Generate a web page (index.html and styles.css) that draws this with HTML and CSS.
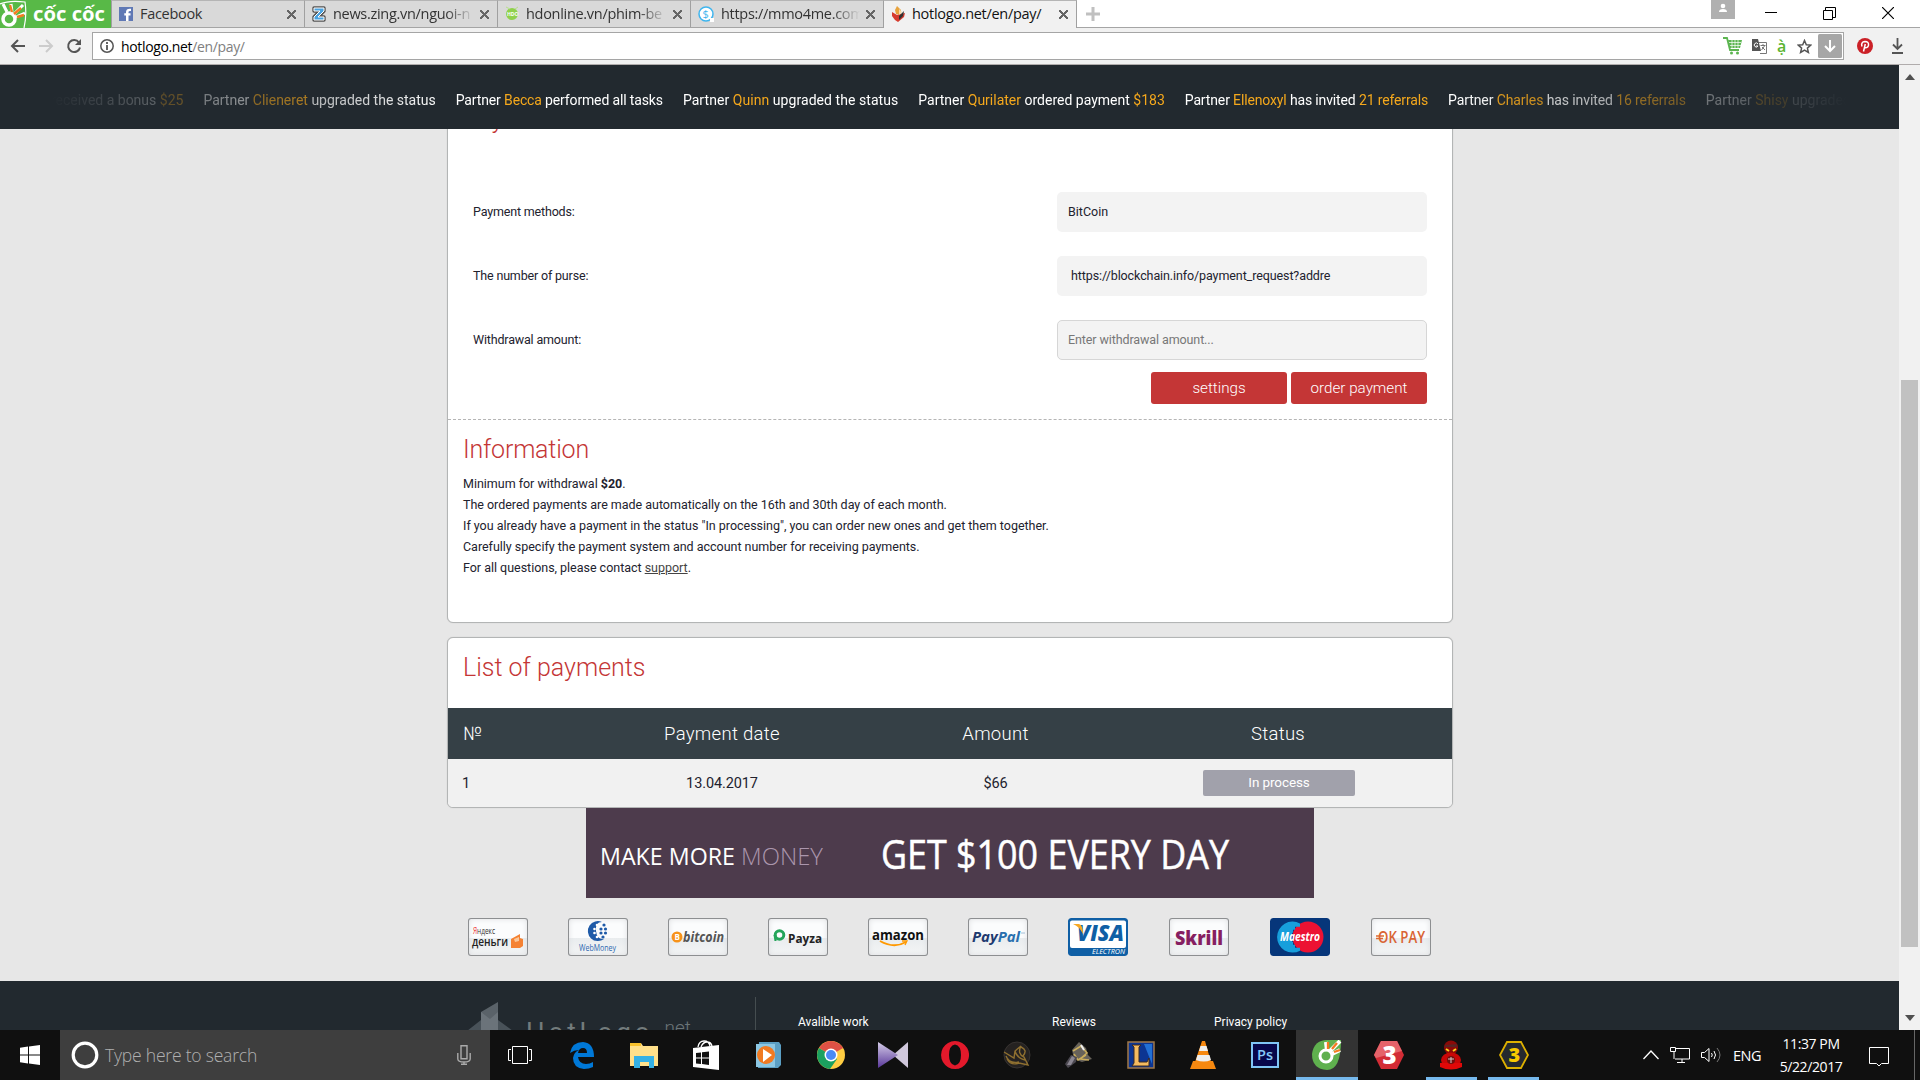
FILE: index.html
```html
<!DOCTYPE html>
<html lang="en">
<head>
    <meta charset="UTF-8">
    <title>hotlogo.net/en/pay/</title>
    <link rel="stylesheet" href="styles.css">
</head>
<body>

<!-- Browser tabs -->
<div class="tab-strip">
    <div class="coccoc">
        <svg width="28" height="28" viewBox="0 0 28 28">
            <circle cx="9" cy="19" r="6" fill="none" stroke="#fff" stroke-width="3.5"/>
            <path d="M0 4 Q9 0 25 2 Q27 15 24 28" fill="none" stroke="#fff" stroke-width="1.2"/>
            <path d="M3 4l4 8M11 4l1 8M23 5l-9 9M25 13l-9 4" stroke="#fff" stroke-width="3"/>
            <path d="M10 5l2 7M21 8l-7 6M24 15l-7 2" stroke="#f47b20" stroke-width="2.4"/>
        </svg>
        <svg width="76" height="28" viewBox="0 0 76 28">
            <text x="1" y="21" textLength="72" lengthAdjust="spacingAndGlyphs" class="coccoc-name">cốc cốc</text>
        </svg>
    </div>
    <div class="tab">
        <svg width="14" height="14" viewBox="0 0 14 14"><rect width="14" height="14" fill="#6079b5"/><path d="M9.5 14V8.500h2V6.200h-2V5q0-1.300 2.500-1V1.700Q7 1.200 7 5v1.200H5.300v2.300H7V14z" fill="#fff"/></svg>
        <span class="tab-title">Facebook</span><span class="tab-close"></span>
    </div>
    <div class="tab">
        <svg width="14" height="16" viewBox="0 0 14 16"><path d="M2 2h10v3L6 11h6v3H2v-3l6-6H2z" fill="#4ba3e0" stroke="#555" stroke-width="3.400" stroke-linejoin="round"/><path d="M2 2h10v3L6 11h6v3H2v-3l6-6H2z" fill="#4ba3e0" stroke="#fff" stroke-width="1"/></svg>
        <span class="tab-title fade">news.zing.vn/nguoi-n</span><span class="tab-close"></span>
    </div>
    <div class="tab">
        <svg width="14" height="16" viewBox="0 0 14 16"><circle cx="7" cy="8" r="6" fill="#8fd14a"/><path d="M1 1l4 2M13 1l-3 2" stroke="#b5df8a"/><text x="2" y="10" class="hdo">HDO</text></svg>
        <span class="tab-title fade">hdonline.vn/phim-be</span><span class="tab-close"></span>
    </div>
    <div class="tab">
        <svg width="16" height="16" viewBox="0 0 16 16"><circle cx="8" cy="8" r="7" fill="#fff" stroke="#3fb5ee" stroke-width="1.500"/><text x="4.500" y="12" class="dollar">$</text><rect x="12" y="12" width="4" height="4" fill="#fff"/></svg>
        <span class="tab-title fade">https://mmo4me.com</span><span class="tab-close"></span>
    </div>
    <div class="tab active">
        <svg width="14" height="16" viewBox="0 0 14 16"><path d="M6 0l4 4-1 5-4-1-1-4z" fill="#e8a33d"/><path d="M1 6l5 3 8-2-1 4-6 5-3-2-3-4z" fill="#d63b2e"/><path d="M13 5l-5 5v4l4-4z" fill="#333"/><path d="M8 3l3 3-3 3z" fill="#f6d9a8"/></svg>
        <span class="tab-title">hotlogo.net/en/pay/</span><span class="tab-close"></span>
    </div>
    <svg class="new-tab" width="14" height="14" viewBox="0 0 14 14"><path d="M7 0v14M0 7h14" stroke="#c0c0c0" stroke-width="3"/></svg>
    <div class="window-buttons">
        <svg class="user" width="24" height="19" viewBox="0 0 24 19"><rect width="24" height="19" fill="#b0b0b0"/><circle cx="12" cy="6" r="2.300" fill="#fff"/><path d="M8 12q0-3 4-3t4 3z" fill="#fff"/></svg>
        <svg width="12" height="14" viewBox="0 0 12 14"><path d="M0 6.500h12" stroke="#000"/></svg>
        <svg width="13" height="13" viewBox="0 0 13 13"><path d="M.500 3.500h9v9h-9zM2.500 3V.500h10v10H10" fill="none" stroke="#000"/></svg>
        <svg width="12" height="12" viewBox="0 0 12 12"><path d="M0 0l12 12M12 0L0 12" stroke="#000" stroke-width="1.200"/></svg>
    </div>
</div>

<!-- Address bar -->
<div class="toolbar">
    <svg width="16" height="16" viewBox="0 0 16 16"><path d="M15 8H2M8 2L2 8l6 6" fill="none" stroke="#555" stroke-width="2"/></svg>
    <svg width="16" height="16" viewBox="0 0 16 16"><path d="M1 8h13M8 2l6 6-6 6" fill="none" stroke="#ccc" stroke-width="2"/></svg>
    <svg width="16" height="16" viewBox="0 0 16 16"><path d="M13 4.500A6 6 0 1 0 14 9.500" fill="none" stroke="#555" stroke-width="2"/><path d="M15 1v6H9z" fill="#555"/></svg>
    <div class="omnibox">
        <svg width="14" height="14" viewBox="0 0 14 14"><circle cx="7" cy="7" r="6.200" fill="none" stroke="#555" stroke-width="1.500"/><path d="M7 6v5M7 3v2" stroke="#555" stroke-width="1.800"/></svg>
        <div class="url"><span>hotlogo.net</span>/en/pay/</div>
        <svg width="19" height="18" viewBox="0 0 19 18"><path d="M0 1h4l3 12h9" fill="none" stroke="#5cb550" stroke-width="1.800"/><path d="M5 3h14l-2 8H7z" fill="#5cb550"/><path d="M6 5.500h12M7 8.500h11M9 3v8M12 3v8M15 3v8" stroke="#fff" stroke-width=".7"/><circle cx="8.500" cy="16" r="1.500" fill="#5cb550"/><circle cx="14.500" cy="16" r="1.500" fill="#5cb550"/></svg>
        <svg class="translate" width="15" height="15" viewBox="0 0 15 15"><path d="M6 3.500h8.500v11H8" fill="#fff" stroke="#777"/><path d="M0 0h6l3 12H0z" fill="#555"/><path d="M6 5a2 2 0 1 0 0 2H4" fill="none" stroke="#fff"/><path d="M8.500 6.500h5M11 5v1M12.500 7l-3 4M10 8l3 3" stroke="#666" stroke-width=".9"/></svg>
        <span class="accent">ạ̀</span>
        <svg width="15" height="15" viewBox="0 0 15 15"><path d="M7.500 1.500l1.800 4.200 4.400.4-3.300 3 1 4.400-3.900-2.300-3.900 2.300 1-4.400-3.300-3 4.400-.4z" fill="none" stroke="#555" stroke-width="1.500"/></svg>
        <svg class="save" width="24" height="24" viewBox="0 0 24 24"><rect width="24" height="24" rx="1.500" fill="#a6a6a6"/><path d="M12 6v11M7 12l5 5 5-5" fill="none" stroke="#fff" stroke-width="2"/></svg>
    </div>
    <svg class="pin" width="16" height="16" viewBox="0 0 16 16"><circle cx="8" cy="8" r="8" fill="#cb2027"/><path d="M5 8.500Q3.500 4 8 3.600q4 0 3.500 3.600Q10.500 10.500 7.500 9.500M8.300 6L6.500 13.500" fill="none" stroke="#fff" stroke-width="1.500"/></svg>
    <svg class="dl" width="11" height="16" viewBox="0 0 11 16"><path d="M5.500 0v11M1 6.500l4.500 4.500L10 6.500M0 15h11" fill="none" stroke="#555" stroke-width="1.800"/></svg>
</div>

<div class="viewport">
    <div class="page">
        <div class="header">
            <div class="ticker">
                <p>received a bonus <b>$25</b></p>
                <p>Partner <b>Clieneret</b> upgraded the status</p>
                <p>Partner <b>Becca</b> performed all tasks</p>
                <p>Partner <b>Quinn</b> upgraded the status</p>
                <p>Partner <b>Qurilater</b> ordered payment <b>$183</b></p>
                <p>Partner <b>Ellenoxyl</b> has invited <b>21 referrals</b></p>
                <p>Partner <b>Charles</b> has invited <b>16 referrals</b></p>
                <p>Partner <b>Shisy</b> upgraded</p>
            </div>
        </div>

        <!-- Order form -->
        <div class="card order">
            <h2>Payment</h2>
            <div class="form">
                <div class="row"><label>Payment methods:</label><div class="field">BitCoin</div></div>
                <div class="row"><label>The number of purse:</label><div class="field purse">https://blockchain.info/payment_request?addre</div></div>
                <div class="row"><label>Withdrawal amount:</label><input class="field amount" type="text" placeholder="Enter withdrawal amount..."></div>
                <div class="buttons"><button>settings</button><button>order payment</button></div>
            </div>
            <div class="info">
                <h2>Information</h2>
                <p>Minimum for withdrawal <strong>$20</strong>.</p>
                <p>The ordered payments are made automatically on the 16th and 30th day of each month.</p>
                <p>If you already have a payment in the status "In processing", you can order new ones and get them together.</p>
                <p>Carefully specify the payment system and account number for receiving payments.</p>
                <p>For all questions, please contact <a href="#">support</a>.</p>
            </div>
        </div>

        <!-- Payment history -->
        <div class="card list">
            <h2>List of payments</h2>
            <div class="table-row head"><span>№</span><span>Payment date</span><span>Amount</span><span>Status</span></div>
            <div class="table-row"><span>1</span><span>13.04.2017</span><span>$66</span><span><i class="badge">In process</i></span></div>
        </div>

        <svg class="banner" width="728" height="90" viewBox="0 0 728 90">
            <rect width="728" height="90" fill="#4d3b4c"/>
            <text x="14" y="57" font-size="24.500" textLength="135" lengthAdjust="spacingAndGlyphs" fill="#fff">MAKE MORE</text>
            <text x="155" y="57" font-size="24.500" font-weight="300" textLength="82" lengthAdjust="spacingAndGlyphs" fill="#ab96ac">MONEY</text>
            <text x="295" y="61" font-size="39.500" textLength="348" lengthAdjust="spacingAndGlyphs" fill="#fff" stroke="#fff" stroke-width=".5">GET $100 EVERY DAY</text>
        </svg>

        <div class="systems">
            <svg class="pay" viewBox="0 0 60 38">
                <text x="5" y="16" font-size="9" textLength="22" lengthAdjust="spacingAndGlyphs" fill="#333"><tspan fill="#e33">Я</tspan>ндекс</text>
                <text x="4" y="28" font-size="13" font-weight="600" textLength="36" lengthAdjust="spacingAndGlyphs" fill="#222">деньги</text>
                <path d="M43 21l9-5v4l3 1v7l-3 2h-9z" fill="#f58233"/><path d="M46 21l5-2v4l-4 1z" fill="#fbc79b"/>
            </svg>
            <svg class="pay" viewBox="0 0 60 38">
                <path d="M34 4A10 10 0 1 0 36 21Q29 22 28 13T34 4z" fill="#1e5aa8"/>
                <g fill="#1e5aa8"><circle cx="36" cy="7" r="1.600"/><circle cx="33" cy="11" r="1.600"/><circle cx="37.500" cy="11" r="1.600"/><circle cx="33" cy="15" r="1.600"/><circle cx="37.500" cy="15" r="1.600"/><circle cx="35" cy="19" r="1.600"/></g>
                <g fill="#fff"><circle cx="29" cy="7" r="1.300"/><circle cx="26.500" cy="11" r="1.300"/><circle cx="26.500" cy="15" r="1.300"/><circle cx="29" cy="19" r="1.300"/></g>
                <text x="11" y="33" font-size="8.500" textLength="37" lengthAdjust="spacingAndGlyphs" fill="#2d68b0">WebMoney</text>
            </svg>
            <svg class="pay" viewBox="0 0 60 38">
                <circle cx="9" cy="19" r="5.500" fill="#f7931a"/><text x="6.500" y="22" font-size="8" font-weight="700" fill="#fff">B</text>
                <text x="15" y="24" font-size="14" font-weight="700" font-style="italic" textLength="41" lengthAdjust="spacingAndGlyphs" fill="#555">bitcoin</text>
            </svg>
            <svg class="pay" viewBox="0 0 60 38">
                <circle cx="11.500" cy="17" r="4.300" fill="none" stroke="#25a55a" stroke-width="3"/><path d="M5.500 17h3v6h-2z" fill="#25a55a"/>
                <text x="20" y="25" font-size="12.500" font-weight="700" textLength="34" lengthAdjust="spacingAndGlyphs" fill="#222">Payza</text>
            </svg>
            <svg class="pay" viewBox="0 0 60 38">
                <text x="4" y="22" font-size="14" font-weight="700" textLength="52" lengthAdjust="spacingAndGlyphs" fill="#111">amazon</text>
                <path d="M12 23q14 8 26 1" fill="none" stroke="#f90" stroke-width="1.800"/><path d="M34 23h5l-2 4" fill="none" stroke="#f90" stroke-width="1.300"/>
            </svg>
            <svg class="pay" viewBox="0 0 60 38">
                <text x="4" y="24" font-size="13.500" font-weight="700" font-style="italic" textLength="48" lengthAdjust="spacingAndGlyphs" fill="#1f3b70">Pay<tspan fill="#2a6fae">Pal</tspan></text><path d="M53 15h4" stroke="#8fb2d0" stroke-width=".8"/>
            </svg>
            <svg class="pay plain" viewBox="0 0 60 38">
                <rect width="60" height="38" rx="3" fill="#0f5fa5"/><rect x="2" y="2.500" width="56" height="27.500" rx="2" fill="#fff"/>
                <text x="9" y="23" font-size="22" font-weight="800" font-style="italic" textLength="47" lengthAdjust="spacingAndGlyphs" fill="#0f5fa5">VISA</text>
                <path d="M5 6h6q4 1 4 10Q11 8 5 6z" fill="#f7a823"/>
                <text x="24" y="36" font-size="6.500" font-style="italic" textLength="33" lengthAdjust="spacingAndGlyphs" fill="#fff">ELECTRON</text>
            </svg>
            <svg class="pay" viewBox="0 0 60 38">
                <text x="6" y="27" font-size="20" font-weight="800" textLength="48" lengthAdjust="spacingAndGlyphs" fill="#861f61">Skrill</text>
            </svg>
            <svg class="pay plain" viewBox="0 0 60 38">
                <rect width="60" height="38" rx="3" fill="#06367a"/><circle cx="38" cy="19" r="15.500" fill="#ec1233"/><path d="M30 5.500a15.500 15.500 0 1 0 0 27.200v-3h-5v-3h-2v-3h-1v-9h1v-3h2v-3h5z" fill="#179fdc"/>
                <text x="10" y="23" font-size="12.500" font-weight="700" font-style="italic" textLength="40" lengthAdjust="spacingAndGlyphs" fill="#fff">Maestro</text>
            </svg>
            <svg class="pay" viewBox="0 0 60 38">
                <path d="M5 18h8M5 20.500h7" fill="none" stroke="#df6a30" stroke-width="1.300"/>
                <text x="7" y="25" font-size="15.500" textLength="47" lengthAdjust="spacingAndGlyphs" font-weight="600" fill="#d96535">OK PAY</text>
            </svg>
        </div>

        <div class="footer">
            <svg width="46" height="29" viewBox="0 0 46 29"><path d="M14 10L31 0v28H14z" fill="#5a6269"/><path d="M14 10l9 7L31 10v19H14z" fill="#6b737a"/><path d="M0 29l14-11v11zM31 18l15 11H31z" fill="#495259"/></svg>
            <span class="logo-name">HotLogo</span><span class="logo-net">.net</span>
            <div class="footer-links"><span>Avalible work</span><span>Reviews</span><span>Privacy policy</span></div>
        </div>
    </div>
    <div class="scrollbar">
        <svg width="10" height="6" viewBox="0 0 10 6"><path d="M0 6l5-6 5 6z" fill="#505050"/></svg>
        <div class="thumb"></div>
        <svg width="10" height="6" viewBox="0 0 10 6"><path d="M0 0l5 6 5-6z" fill="#505050"/></svg>
    </div>
</div>

<!-- Windows taskbar -->
<div class="taskbar">
    <div class="start"><svg width="20" height="20" viewBox="0 0 20 20"><path d="M0 2.800L8 1.600V9.500H0zM9 1.400L20 0v9.500H9zM0 10.500h8v7.900L0 17.200zM9 10.500h11V20L9 18.600z" fill="#fff"/></svg></div>
    <div class="search">
        <svg width="28" height="28" viewBox="0 0 28 28"><circle cx="14" cy="14" r="11.800" fill="none" stroke="#fff" stroke-width="3.200"/></svg>
        <span>Type here to search</span>
        <svg width="14" height="20" viewBox="0 0 14 20"><path d="M4 .800h6v13H4zM.800 8v6q0 3 6.200 3t6.200-3V8M7 17v2M4 19.300h6" fill="none" stroke="#aaa" stroke-width="1.400"/></svg>
    </div>
    <div class="apps">
        <div class="app"><svg width="24" height="18" viewBox="0 0 24 18"><path d="M4.500.500h15v17h-15zM3 3.500H.500v11H3M21 3.500h2.500v11H21" fill="none" stroke="#fff"/></svg></div>
        <div class="app"><svg width="26" height="28" viewBox="0 0 26 28"><path d="M1 12Q3 1 14 1q11 1 11 15H9q1 7 8 7 4 0 7-2v5q-4 2-9 2Q4 27 4 17q1-6 6-8-5 0-9 3zM9 12h9q0-5-4-5-4 0-5 5z" fill="#0078d7"/></svg></div>
        <div class="app"><svg width="28" height="25" viewBox="0 0 28 25"><path d="M0 0h11l2 3h15v20H0z" fill="#ffe08a"/><path d="M0 0h11v3H0z" fill="#f8c12c"/><path d="M4 25V13h20v12h-5v-6h-9v6z" fill="#35b1e5"/></svg></div>
        <div class="app"><svg width="26" height="30" viewBox="0 0 26 30"><path d="M0 8l26-3v25L0 27z" fill="#fff"/><path d="M5 7q1-6 6-6t6 5M8 7q2-5 6-5t5 4" fill="none" stroke="#fff" stroke-width="1.300"/><path d="M3 13l5-.6v5H3zM9 12.300l7-.8v6H9zM3 18.500h5V24l-5-.6zM9 18.500h7V25l-7-.9z" fill="#111"/></svg></div>
        <div class="app"><svg width="25" height="26" viewBox="0 0 25 26"><path d="M3 0h20l2 3v20l-3 3H2z" fill="#5b9fc4"/><path d="M0 2h19v23H0z" fill="#8cc7e3"/><circle cx="10" cy="13" r="9" fill="#f07a22"/><path d="M7 7l9 6-9 7z" fill="#fff"/></svg></div>
        <div class="app"><svg width="28" height="28" viewBox="0 0 28 28"><circle cx="14" cy="14" r="14" fill="#ffcd42"/><path d="M14 14L1.900 7a14 14 0 0 1 24.200 0z" fill="#de5145"/><path d="M14 14L1.900 7A14 14 0 0 0 13 28l7-10z" fill="#1ba15f"/><path d="M5 5.500A14 14 0 0 1 26.200 7H14z" fill="#de5145"/><circle cx="14" cy="14" r="6.500" fill="#fff"/><circle cx="14" cy="14" r="5" fill="#4a8af4"/></svg></div>
        <div class="app"><svg width="30" height="26" viewBox="0 0 30 26"><defs><linearGradient id="kmp" x2="0" y2="1"><stop offset="0" stop-color="#d5cde8"/><stop offset="1" stop-color="#59379a"/></linearGradient></defs><path d="M30 0L15 13l15 13z" fill="#d0c8dc"/><path d="M0 0l20 13L0 26z" fill="url(#kmp)"/></svg></div>
        <div class="app"><svg width="28" height="28" viewBox="0 0 28 28"><path d="M14 0a14 14 0 1 0 .1 0zM14 3.500q6 1 6 10.500T14 24.500Q8 23.500 8 14T14 3.500z" fill="#e3192b" fill-rule="evenodd"/></svg></div>
        <div class="app"><svg width="28" height="28" viewBox="0 0 28 28"><circle cx="14" cy="14" r="13" fill="#252221" stroke="#373331"/><path d="M1 11l10 6 1-7 6-5q-4 8 3 11l4 8-9-2q-8 3-12-4M3 15q3 8 13 6M12 10q2 7 10 9M18 6q7 3 2 9" fill="none" stroke="#8f7030" stroke-width="1.400"/></svg></div>
        <div class="app"><svg width="28" height="28" viewBox="0 0 28 28"><path d="M7 9L14 1l7 6 2 7 4 4-10 3-8-3z" fill="#67625a"/><path d="M8 10l8-5 6 7-7 6 9 1M9 13l4 6 8-5" fill="none" stroke="#c9ad5c" stroke-width="1.500"/><path d="M0 23l6-9 6 2-1 5-8 6z" fill="#4b4850"/><path d="M2 24l5-9 3 2-4 7" fill="#8b8792"/><path d="M16 4l3 5" stroke="#eee" stroke-width="2"/></svg></div>
        <div class="app"><svg width="28" height="28" viewBox="0 0 28 28"><rect x="1" y="1" width="26" height="26" fill="#0c3592" stroke="#a07848" stroke-width="1.500"/><path d="M17 3h8v20z" fill="#2270d4"/><path d="M5 4h9l-2 2v15h8l2-4v8H5l2-3V6z" fill="#f4bb60" stroke="#3d2a20"/></svg></div>
        <div class="app"><svg width="26" height="28" viewBox="0 0 26 28"><path d="M3 20h20l3 8H0z" fill="#f68810"/><path d="M12 0h3l6 21q-8 5-16 0z" fill="#f68810"/><path d="M10.500 5h6l1.500 5H9zM7.500 14h12l1.500 5q-7 3-15 0z" fill="#eee"/></svg></div>
        <div class="app"><svg width="28" height="26" viewBox="0 0 28 26"><rect x="1" y="1" width="26" height="24" fill="#07074b" stroke="#7fc5f5" stroke-width="2"/><text x="6" y="18" font-size="14" font-weight="600" textLength="16" lengthAdjust="spacingAndGlyphs" fill="#85c8f7">Ps</text></svg></div>
        <div class="app current"><svg width="30" height="30" viewBox="0 0 30 30"><path d="M29 0q0 30-14 30Q0 29 0 14 2 0 15 0z" fill="#5fb04e"/><circle cx="14" cy="16" r="6" fill="none" stroke="#fff" stroke-width="3"/><path d="M14 2l1 9M18 11L28 1M20 14l8-4" stroke="#fff" stroke-width="4"/><path d="M16 2v7M20 9l5-6M22 12l6-2" stroke="#f47b20" stroke-width="2.300"/></svg></div>
        <div class="app"><svg width="30" height="28" viewBox="0 0 30 28"><path d="M7 0h16l7 14-7 14H7L0 14z" fill="#d32c35"/><path d="M7 0h16l5 10L2 17 0 14z" fill="#e5636a"/><text x="8.500" y="23" font-size="24" font-weight="800" fill="#fff">3</text></svg></div>
        <div class="app open"><svg width="24" height="30" viewBox="0 0 24 30"><circle cx="12" cy="7.500" r="7" fill="#8b0a08"/><path d="M6 5l12-1v3H6z" fill="#5b2222"/><path d="M7 9l3 2M17 9l-3 2" stroke="#ffd21a" stroke-width="2"/><ellipse cx="12" cy="20" rx="10" ry="7.500" fill="#c90707"/><path d="M1 23h22v4q-11 5-22 0z" fill="#e00808"/><circle cx="12" cy="20" r="4" fill="#71100e"/><path d="M9 19h6M12 17v6" stroke="#ddd" stroke-width=".9"/></svg></div>
        <div class="app open"><svg width="30" height="28" viewBox="0 0 30 28"><path d="M8 1h14l7 13-7 13H8L1 14z" fill="#25292e" stroke="#ddb000" stroke-width="1.800"/><text x="9.500" y="21" font-size="20" font-weight="800" fill="#f8c800">3</text></svg></div>
    </div>
    <div class="tray">
        <svg width="16" height="10" viewBox="0 0 16 10"><path d="M.500 9L8 1l7.500 8" fill="none" stroke="#fff" stroke-width="1.300"/></svg>
        <svg width="20" height="16" viewBox="0 0 20 16"><path d="M5 1.500h14.500v10.500h-14.500M4 12V5M.500.500h5v4h-5zM12 12v3M7 15.500h8" fill="none" stroke="#fff"/></svg>
        <svg width="20" height="16" viewBox="0 0 20 16"><path d="M.500 5.500h3L8 1.500v13l-4.500-4h-3zM10.500 6q1.500 2 0 4M13 4q3 4 0 8" fill="none" stroke="#fff"/><path d="M16 1q6 7 0 14" fill="none" stroke="#777"/></svg>
        <span class="lang">ENG</span>
        <div class="clock"><span>11:37 PM</span><span>5/22/2017</span></div>
        <svg class="notes" width="20" height="20" viewBox="0 0 20 20"><path d="M.500.500h19v16h-7L10 19l-2.500-2.500h-7z" fill="none" stroke="#fff"/></svg>
    </div>
</div>

</body>
</html>
```
FILE: styles.css
```css
* {
    box-sizing: border-box;
}

body {
    margin: 0;
    width: 1920px;
    height: 1080px;
    overflow: hidden;
    display: flex;
    flex-direction: column;
    font-family: Roboto, sans-serif;
    background: #e7e7e7;
    color: #22222e;
}

svg {
    display: block;
    flex-shrink: 0;
}

svg text {
    font-family: "Open Sans", sans-serif;
}

h2, p {
    margin: 0;
    font-weight: 300;
}

/* Tabs */
.tab-strip {
    display: flex;
    height: 28px;
    background: #fff;
    border-bottom: 1px solid #a5a5a5;
    font-family: "Open Sans", sans-serif;
}

.coccoc {
    display: flex;
    width: 111px;
    height: 28px;
    gap: 4px;
    background: #58b947;
}

.coccoc-name {
    font-size: 20px;
    font-weight: 700;
    fill: #fff;
}

.tab {
    display: flex;
    align-items: center;
    width: 193px;
    height: 27px;
    padding: 0 8px 0 7px;
    background: #d9d9d9;
    border-top: 1px solid #b5b5b5;
    border-left: 1px solid #a0a0a0;
    font-size: 14.5px;
    color: #333;
}

.tab.active {
    width: 194px;
    height: 28px;
    padding-bottom: 1px;
    background: #f1f1f1;
    border-right: 1px solid #a0a0a0;
    color: #111;
}

.tab-title {
    flex: 1;
    width: 0;
    margin: -1px 6px 0 7px;
    overflow: hidden;
    white-space: nowrap;
    letter-spacing: -0.3px;
}

.tab-title.fade {
    mask-image: linear-gradient(to right, #000 80%, transparent);
}

.tab-close {
    width: 9px;
    height: 9px;
    background: linear-gradient(45deg, transparent 43%, #666 43%, #666 57%, transparent 57%), linear-gradient(-45deg, transparent 43%, #666 43%, #666 57%, transparent 57%);
}

.hdo {
    font-size: 5px;
    font-weight: 700;
    fill: #fff;
}

.dollar {
    font-size: 11px;
    fill: #3fb5ee;
}

.new-tab {
    margin: 7px 0 0 9px;
}

.window-buttons {
    display: flex;
    align-items: center;
    margin-left: auto;
    padding-right: 26px;
    gap: 46px;
    height: 26px;
}

.window-buttons .user {
    align-self: flex-start;
    margin-right: -16px;
}

/* Toolbar */
.toolbar {
    display: flex;
    align-items: center;
    height: 37px;
    padding: 0 17px 0 10px;
    background: #f1f1f1;
    border-bottom: 1px solid #b0acac;
}

.toolbar > svg {
    margin-right: 12px;
}

.omnibox {
    display: flex;
    align-items: center;
    flex: 1;
    height: 28px;
    margin-right: 13px;
    margin-left: -2px;
    padding: 0 1px 0 7px;
    background: #fff;
    border: 1px solid #a5a5a5;
    font-family: "Open Sans", sans-serif;
}

.url {
    flex: 1;
    margin-left: 7px;
    font-size: 14px;
    letter-spacing: -0.35px;
    color: #808080;
}

.url span {
    color: #000;
}

.translate {
    margin: 0 10px 0 10px;
}

.accent {
    width: 10px;
    margin-right: 10px;
    font-size: 16px;
    font-weight: 600;
    line-height: 20px;
    color: #5cb531;
}

.save {
    margin-left: 6px;
}

.toolbar > .pin {
    margin-right: 19px;
}

.toolbar > .dl {
    margin-right: 0;
}

/* Page */
.viewport {
    display: flex;
    height: 965px;
}

.page {
    flex: 1;
    height: 965px;
    overflow: hidden;
}

.header {
    position: relative;
    z-index: 1;
    height: 64px;
    padding: 0 51px;
    background: #22292f;
}

.ticker {
    display: flex;
    align-items: center;
    gap: 20px;
    height: 69px;
    overflow: hidden;
    white-space: nowrap;
    font-size: 14px;
    color: #fff;
    mask-image: linear-gradient(to right, transparent, #000 400px, #000 1400px, transparent);
}

.ticker p {
    flex-shrink: 0;
    font-weight: 400;
}

.ticker p:nth-child(3),
.ticker p:nth-child(6) {
    letter-spacing: -0.14px;
}

.ticker p:nth-child(4) {
    letter-spacing: 0.06px;
}

.ticker p:nth-child(7) {
    letter-spacing: -0.1px;
}

.ticker b {
    font-weight: 400;
    color: #f5a81c;
}

.card {
    width: 1006px;
    margin-left: 447px;
    background: #fff;
    border: 1px solid #b3b5b5;
    border-radius: 6px;
    box-shadow: 0 0 1px #bbb;
    overflow: hidden;
}

.card h2 {
    font-size: 25px;
    line-height: 30px;
    color: #c43636;
}

.order {
    height: 524px;
    margin-top: -30px;
}

.order > h2 {
    padding: 5px 0 0 15px;
}

.form {
    height: 285px;
    padding: 57px 25px 0;
    border-bottom: 1px dashed #b5b5b5;
}

.row {
    display: flex;
    justify-content: space-between;
    align-items: center;
    height: 40px;
    margin-bottom: 24px;
    font-size: 12.5px;
}

.row label {
    padding-bottom: 2px;
    letter-spacing: -0.17px;
}

.field {
    width: 370px;
    height: 40px;
    padding: 0 11px;
    background: #f3f3f3;
    border: 0;
    border-radius: 5px;
    font: 12.5px/40px Roboto, sans-serif;
    color: #22222e;
}

.purse {
    padding-left: 14px;
    letter-spacing: -0.1px;
}

.amount {
    padding: 0 10px;
    border: 1px solid #d6d6d6;
    letter-spacing: -0.1px;
}

.amount::placeholder {
    color: #777;
}

.buttons {
    display: flex;
    justify-content: flex-end;
    gap: 4px;
    margin-top: -12px;
}

.buttons button {
    width: 136px;
    height: 32px;
    padding: 0;
    background: #c43636;
    border: 0;
    border-radius: 3px;
    font: 300 15.2px Roboto, sans-serif;
    color: #fff;
}

.info {
    padding: 15px;
}

.info h2 {
    margin-bottom: 8px;
    letter-spacing: -0.2px;
}

.info p {
    font-size: 12.5px;
    font-weight: 400;
    line-height: 21px;
    letter-spacing: -0.02px;
    white-space: nowrap;
}

.info strong {
    font-weight: 700;
}

.info a {
    color: #444;
}

.list {
    height: 171px;
    margin-top: 14px;
}

.list h2 {
    height: 70px;
    padding: 15px 15px 0;
}

.table-row {
    display: grid;
    grid-template-columns: 133px 282px 265px 300px;
    align-items: center;
    height: 49px;
    background: #f1f1f1;
    font-size: 14.5px;
    letter-spacing: -0.1px;
    text-align: center;
}

.table-row span:first-child {
    padding-left: 14px;
    text-align: left;
}

.table-row.head {
    height: 51px;
    background: #354046;
    font-size: 18.5px;
    font-weight: 300;
    letter-spacing: 0.3px;
    color: #fff;
}

.table-row.head span:first-child {
    padding-left: 15px;
}

.badge {
    display: block;
    width: 152px;
    height: 26px;
    margin: -2px auto 0;
    position: relative;
    left: 1px;
    background: #a1a1ab;
    border-radius: 2px;
    font-size: 13.5px;
    font-style: normal;
    line-height: 24px;
    color: #fff;
}

.banner {
    margin-left: 586px;
}

.systems {
    display: flex;
    gap: 40px;
    margin: 20px 0 0 468px;
}

.pay {
    width: 60px;
    height: 38px;
    background: linear-gradient(#fbfcfd 52%, #e9ecee 52%, #f4f5f6);
    border-radius: 3px;
    box-shadow: inset 0 0 0 1px #8d8f91, inset 0 0 6px #d5d7d9;
}

.pay:nth-child(n+8) {
    margin-left: 1px;
}

.pay.plain {
    background: none;
    box-shadow: none;
}

.footer {
    display: flex;
    align-items: flex-start;
    height: 49px;
    margin-top: 25px;
    padding: 21px 0 0 467px;
    background: #22292f;
    white-space: nowrap;
}

.logo-name {
    width: 134px;
    margin: 15px 0 0 13px;
    font-size: 26px;
    letter-spacing: 3.9px;
    color: #737b7c;
}

.logo-net {
    width: 95px;
    margin-top: 14px;
    font-size: 19px;
    font-weight: 300;
    color: #6b7478;
}

.footer-links {
    display: flex;
    height: 40px;
    margin-top: -5px;
    padding: 18px 0 0 42px;
    border-left: 1px solid #454d50;
    font-size: 12px;
    color: #fff;
}

.footer-links span:nth-child(1) {
    width: 254px;
}

.footer-links span:nth-child(2) {
    width: 162px;
}

.scrollbar {
    display: flex;
    flex-direction: column;
    align-items: center;
    width: 21px;
    padding: 9px 0;
    background: #f1f1f1;
}

.thumb {
    width: 17px;
    height: 567px;
    margin: 300px 0 auto;
    background: #c1c1c1;
}

/* Taskbar */
.taskbar {
    display: flex;
    height: 50px;
    background: #101010;
    font-family: "Open Sans", sans-serif;
    color: #fff;
}

.start {
    display: flex;
    align-items: center;
    justify-content: center;
    width: 60px;
}

.search {
    display: flex;
    align-items: center;
    width: 430px;
    padding: 0 19px 0 11px;
    background: #3e3e3e;
    font-size: 17.5px;
    font-weight: 300;
    letter-spacing: -0.2px;
    color: #b0b0b0;
}

.search span {
    flex: 1;
    padding-left: 6px;
}

.apps {
    display: flex;
    margin-left: -1px;
}

.app {
    display: flex;
    align-items: center;
    justify-content: center;
    width: 62.1px;
    height: 50px;
}

.app.current {
    background: #333;
    border-bottom: 3px solid #76b9ed;
    padding-top: 3px;
}

.app.open {
    width: 51px;
    margin: 0 5.55px;
    padding-top: 3px;
    border-bottom: 3px solid #76b9ed;
}

.tray {
    display: flex;
    align-items: center;
    margin-left: auto;
    margin-right: 5px;
    padding-right: 25px;
    border-right: 1px solid #666;
    gap: 11px;
}

.lang {
    width: 31px;
    padding-left: 1px;
    font-size: 14.5px;
    letter-spacing: -0.5px;
}

.clock {
    display: flex;
    flex-direction: column;
    align-items: center;
    width: 74px;
    font-size: 14px;
    line-height: 23px;
    letter-spacing: -0.4px;
    white-space: nowrap;
}

.notes {
    margin: 3px 0 0 10px;
}
```
